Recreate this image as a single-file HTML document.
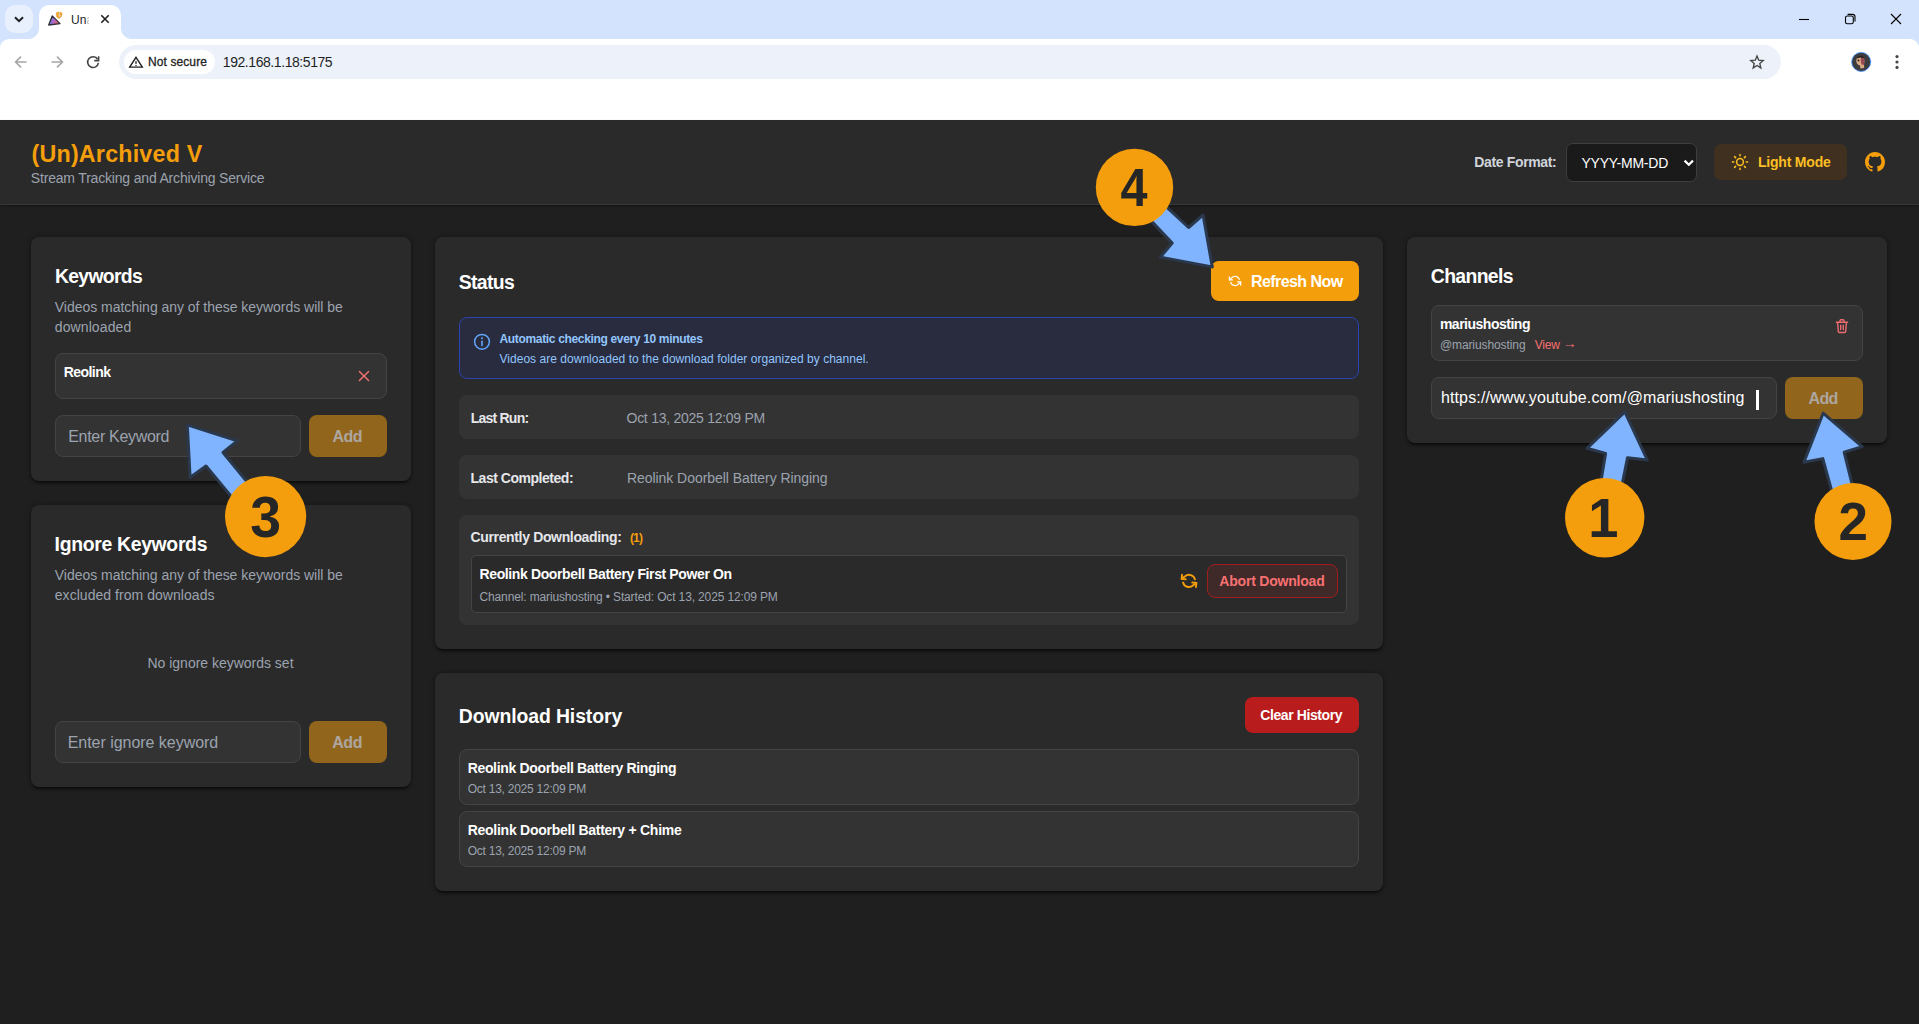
<!DOCTYPE html>
<html lang="en">
<head>
<meta charset="utf-8">
<title>(Un)Archived V</title>
<style>
*{box-sizing:border-box;margin:0;padding:0}
html,body{width:1919px;height:1024px;overflow:hidden;background:#1f1f1f;font-family:'Liberation Sans',sans-serif}
.a{position:absolute}
.t{position:absolute;white-space:pre;font-family:'Liberation Sans',sans-serif}
#tabstrip{left:0;top:0;width:1919px;height:60px;background:#d3e3fd}
#toolbar{left:0;top:39px;width:1919px;height:81px;background:#fff;border-radius:9px 9px 0 0}
#tabsearch{left:5px;top:5px;width:28px;height:28px;border-radius:10px;background:#e8f0fe}
#tab{left:39px;top:5px;width:82px;height:35px;background:#fff;border-radius:10px 10px 0 0}
#tab:before,#tab:after{content:"";position:absolute;bottom:1px;width:10px;height:10px;background:radial-gradient(circle at 0 0,rgba(255,255,255,0) 9.5px,#fff 10px)}
#tab:before{left:-10px}
#tab:after{right:-10px;background:radial-gradient(circle at 100% 0,rgba(255,255,255,0) 9.5px,#fff 10px)}
#omni{left:119px;top:45px;width:1662px;height:34px;border-radius:17px;background:#edf2fa}
#chip{left:124px;top:50px;width:91px;height:24px;border-radius:12px;background:#fff}
#header{left:0;top:120px;width:1919px;height:85px;background:#2a2a2a;border-bottom:1px solid #383838;box-shadow:0 1px 2px rgba(0,0,0,.35)}
.card{position:absolute;background:#2a2a2a;border-radius:8px;box-shadow:0 3px 3px -1px rgba(0,0,0,.55),0 0 4px 1px rgba(0,0,0,.24)}
.box{position:absolute;background:#333;border:1px solid #444;border-radius:8px}
.row{position:absolute;background:#333;border-radius:8px}
.addbtn{position:absolute;background:#92651d;border-radius:8px}
svg{position:absolute;overflow:visible}
.num{position:absolute;font-weight:700;color:#262626;text-align:center;white-space:pre}
</style>
</head>
<body>
<!-- browser chrome -->
<div class="a" id="tabstrip"></div>
<div class="a" id="toolbar"></div>
<div class="a" id="tabsearch"></div>
<div class="a" id="tab"></div>
<div class="a" id="omni"></div>
<div class="a" id="chip"></div>
<svg class="a" style="left:0;top:0" width="1919" height="120" viewBox="0 0 1919 120" fill="none" stroke-linecap="round" stroke-linejoin="round">
<!-- tab search chevron -->
<path d="M15 17.2 L19 21.2 L23 17.2" stroke="#1f1f1f" stroke-width="2" stroke-linecap="butt" stroke-linejoin="miter"/>
<!-- favicon -->
<defs><linearGradient id="fg" x1="0" y1="0.3" x2="1" y2="0.6"><stop offset="0.05" stop-color="#4a8fe8"/><stop offset=".5" stop-color="#b565c4"/><stop offset=".95" stop-color="#f0645a"/></linearGradient></defs>
<path d="M52.2 15.9 L48.7 25 L60 23.6 Z" fill="url(#fg)" stroke="#2e2e38" stroke-width="1.3"/>
<path d="M56.4 13.2 Q57.6 11.4 59.3 12.4 Q61.6 11.6 62.2 13.8 Q62.4 16.6 59.6 18.2 Q57.4 18.6 56.6 16.6 Q56 14.8 56.4 13.2Z" fill="#f5a52a" stroke="#d9922a" stroke-width=".5"/>
<path d="M59.6 13 Q58.4 15.4 59.2 16.6 Q60 16.8 60.4 15.4" stroke="#d8d8d8" stroke-width=".9" fill="none"/>
<!-- tab close -->
<path d="M101.3 15.3 L108.7 22.7 M108.7 15.3 L101.3 22.7" stroke="#1f1f1f" stroke-width="1.6" stroke-linecap="butt"/>
<!-- back -->
<path d="M26.5 62 H15.8 M21 56.6 L15.6 62 L21 67.4" stroke="#a6a6a6" stroke-width="1.6" stroke-linecap="butt" stroke-linejoin="miter"/>
<!-- forward -->
<path d="M51.5 62 H62.2 M57 56.6 L62.4 62 L57 67.4" stroke="#a6a6a6" stroke-width="1.6" stroke-linecap="butt" stroke-linejoin="miter"/>
<!-- reload -->
<path d="M97.6 59.2 A5.4 5.4 0 1 0 98.4 62.9" stroke="#474747" stroke-width="1.6" stroke-linecap="butt"/>
<path d="M98.6 56.2 V60.6 H94.2" stroke="#474747" stroke-width="1.6" stroke-linecap="butt" stroke-linejoin="miter"/>
<!-- warning -->
<path d="M136 57.4 L142.3 67.1 H129.7 Z" stroke="#1f1f1f" stroke-width="1.4" stroke-linejoin="miter"/>
<path d="M136 61 V64" stroke="#1f1f1f" stroke-width="1.2" stroke-linecap="butt"/><circle cx="136" cy="65.5" r=".7" fill="#1f1f1f"/>
<!-- star -->
<path d="M1757 56 L1758.7 60.2 L1763.2 60.6 L1759.8 63.5 L1760.8 67.9 L1757 65.5 L1753.2 67.9 L1754.2 63.5 L1750.8 60.6 L1755.3 60.2 Z" stroke="#474747" stroke-width="1.4" stroke-linejoin="miter"/>
<!-- avatar -->
<circle cx="1861.2" cy="61.9" r="9.5" fill="#3c3c3f" stroke="#3b8cff" stroke-width=".8"/>
<path d="M1856.6 59 Q1857 56.6 1860 56.6 L1862.6 56.8 Q1864.6 58 1864.4 61 L1864 65 L1864.2 68 L1860.4 68.4 L1860 65.4 Q1857.6 65.4 1857 63.6 L1856.2 61.2 Z" fill="#d9a884"/>
<path d="M1861 57 L1863 57 Q1864.8 58.4 1864.4 61.4 L1863.8 65 L1861.4 64.6 Q1860.4 61 1861 57Z" fill="#9a4a52"/>
<path d="M1856.8 57.4 Q1860 55 1864 57 L1863.4 58 Q1860 56.8 1857.2 58.4Z" fill="#1b1b1e"/>
<circle cx="1858.5" cy="60.4" r=".9" fill="#15110d"/>
<!-- kebab -->
<circle cx="1897" cy="56.6" r="1.6" fill="#474747"/><circle cx="1897" cy="62" r="1.6" fill="#474747"/><circle cx="1897" cy="67.4" r="1.6" fill="#474747"/>
<!-- window controls -->
<path d="M1799 19.5 H1809" stroke="#000" stroke-width="1.1" stroke-linecap="butt"/>
<rect x="1845.5" y="16" width="7.8" height="7.8" rx="1.8" stroke="#000" stroke-width="1.1"/>
<path d="M1847.6 14.4 H1852.6 A2.4 2.4 0 0 1 1855 16.8 V21.6" stroke="#000" stroke-width="1.1" stroke-linecap="butt"/>
<path d="M1891 14 L1901 24 M1901 14 L1891 24" stroke="#000" stroke-width="1.1" stroke-linecap="butt"/>
</svg>
<span class="t" style="left:71px;top:11.5px;width:18.2px;overflow:hidden;font-size:12px;line-height:16px;color:#1f1f1f">Un<span style="opacity:.3">a</span></span>

<!-- app -->
<div class="a" id="header"></div>
<div class="a" style="left:1565.5px;top:143px;width:131.5px;height:39px;background:#1a1a1a;border:1px solid #3e3e3e;border-radius:7px"></div>
<div class="a" style="left:1714px;top:144px;width:133px;height:36px;background:#40301f;border-radius:7px"></div>

<div class="card" style="left:31px;top:237px;width:380px;height:244px"></div>
<div class="card" style="left:31px;top:505px;width:380px;height:282px"></div>
<div class="card" style="left:435px;top:237px;width:948px;height:412px"></div>
<div class="card" style="left:435px;top:673px;width:948px;height:218px"></div>
<div class="card" style="left:1407px;top:237px;width:480px;height:206px"></div>

<!-- keywords -->
<div class="box" style="left:55px;top:353px;width:332px;height:46px"></div>
<div class="box" style="left:55px;top:415px;width:246px;height:42px"></div>
<div class="addbtn" style="left:309px;top:415px;width:78px;height:42px"></div>
<!-- ignore -->
<div class="box" style="left:55px;top:721px;width:246px;height:42px"></div>
<div class="addbtn" style="left:309px;top:721px;width:78px;height:42px"></div>
<!-- status -->
<div class="a" style="left:1211px;top:261px;width:148px;height:40px;background:#f59e0b;border-radius:8px"></div>
<div class="a" style="left:459px;top:317px;width:900px;height:62px;background:#282c3e;border:1px solid #2b44b3;border-radius:8px"></div>
<div class="row" style="left:459px;top:395px;width:900px;height:44px"></div>
<div class="row" style="left:459px;top:455px;width:900px;height:44px"></div>
<div class="row" style="left:459px;top:515px;width:900px;height:110px"></div>
<div class="a" style="left:471px;top:555px;width:876px;height:58px;background:#2a2a2a;border:1px solid #444;border-radius:5px"></div>
<div class="a" style="left:1207px;top:564px;width:131px;height:34px;background:#3f2929;border:1px solid #a11d1d;border-radius:8px"></div>
<!-- history -->
<div class="a" style="left:1245px;top:697px;width:114px;height:36px;background:#b91c1c;border-radius:8px"></div>
<div class="box" style="left:459px;top:749px;width:900px;height:56px"></div>
<div class="box" style="left:459px;top:811px;width:900px;height:56px"></div>
<!-- channels -->
<div class="box" style="left:1431px;top:305px;width:432px;height:56px"></div>
<div class="box" style="left:1431px;top:377px;width:346px;height:42px"></div>
<div class="addbtn" style="left:1785px;top:377px;width:78px;height:42px"></div>
<div class="a" style="left:1756px;top:390px;width:3px;height:20px;background:#fff"></div>

<span class="t" style="left:148.0px;top:53.6px;font-size:12px;line-height:16px;font-weight:400;color:#1f1f1f;letter-spacing:0.097px;-webkit-text-stroke:.3px #1f1f1f;">Not secure</span>
<span class="t" style="left:222.8px;top:52.8px;font-size:14px;line-height:18px;font-weight:400;color:#1f1f1f;letter-spacing:-0.434px;">192.168.1.18:5175</span>
<span class="t" style="left:31.5px;top:138.9px;font-size:23.3px;line-height:30px;font-weight:700;color:#f59e0b;letter-spacing:0.194px;">(Un)Archived V</span>
<span class="t" style="left:30.8px;top:168.8px;font-size:14px;line-height:18px;font-weight:400;color:#9ca3af;letter-spacing:-0.183px;">Stream Tracking and Archiving Service</span>
<span class="t" style="left:1474.2px;top:153.1px;font-size:14px;line-height:18px;font-weight:700;color:#d1d5db;letter-spacing:-0.342px;">Date Format:</span>
<span class="t" style="left:1581.5px;top:154.1px;font-size:14px;line-height:18px;font-weight:400;color:#ffffff;letter-spacing:-0.244px;">YYYY-MM-DD</span>
<span class="t" style="left:1757.9px;top:153.1px;font-size:14px;line-height:18px;font-weight:700;color:#fbbf24;letter-spacing:-0.186px;">Light Mode</span>
<span class="t" style="left:55.0px;top:263.8px;font-size:19.4px;line-height:25px;font-weight:700;color:#ffffff;letter-spacing:-0.711px;">Keywords</span>
<span class="t" style="left:54.8px;top:298.1px;font-size:14px;line-height:18px;font-weight:400;color:#9ca3af;letter-spacing:-0.027px;">Videos matching any of these keywords will be</span>
<span class="t" style="left:54.8px;top:318.1px;font-size:14px;line-height:18px;font-weight:400;color:#9ca3af;letter-spacing:0.098px;">downloaded</span>
<span class="t" style="left:63.7px;top:363.1px;font-size:14px;line-height:18px;font-weight:700;color:#ffffff;letter-spacing:-0.540px;">Reolink</span>
<span class="t" style="left:68.2px;top:426.0px;font-size:16px;line-height:21px;font-weight:400;color:#9ca3af;letter-spacing:-0.303px;">Enter Keyword</span>
<span class="t" style="left:332.5px;top:426.0px;font-size:16px;line-height:21px;font-weight:700;color:#aca69f;letter-spacing:-0.570px;">Add</span>
<span class="t" style="left:54.6px;top:531.8px;font-size:19.4px;line-height:25px;font-weight:700;color:#ffffff;letter-spacing:-0.321px;">Ignore Keywords</span>
<span class="t" style="left:54.8px;top:566.1px;font-size:14px;line-height:18px;font-weight:400;color:#9ca3af;letter-spacing:-0.030px;">Videos matching any of these keywords will be</span>
<span class="t" style="left:54.8px;top:586.1px;font-size:14px;line-height:18px;font-weight:400;color:#9ca3af;letter-spacing:0.041px;">excluded from downloads</span>
<span class="t" style="left:147.5px;top:654.4px;font-size:14px;line-height:18px;font-weight:400;color:#9ca3af;letter-spacing:-0.013px;">No ignore keywords set</span>
<span class="t" style="left:67.7px;top:732.2px;font-size:16px;line-height:21px;font-weight:400;color:#9ca3af;letter-spacing:-0.034px;">Enter ignore keyword</span>
<span class="t" style="left:332.2px;top:732.0px;font-size:16px;line-height:21px;font-weight:700;color:#aca69f;letter-spacing:-0.436px;">Add</span>
<span class="t" style="left:458.8px;top:270.0px;font-size:19.4px;line-height:25px;font-weight:700;color:#ffffff;letter-spacing:-0.669px;">Status</span>
<span class="t" style="left:1251.0px;top:271.0px;font-size:16px;line-height:21px;font-weight:700;color:#ffffff;letter-spacing:-0.572px;">Refresh Now</span>
<span class="t" style="left:499.5px;top:330.8px;font-size:12px;line-height:16px;font-weight:700;color:#93c5fd;letter-spacing:-0.336px;">Automatic checking every 10 minutes</span>
<span class="t" style="left:499.5px;top:350.8px;font-size:12px;line-height:16px;font-weight:400;color:#93c5fd;letter-spacing:0.028px;">Videos are downloaded to the download folder organized by channel.</span>
<span class="t" style="left:470.8px;top:408.6px;font-size:14px;line-height:18px;font-weight:700;color:#e5e7eb;letter-spacing:-0.785px;">Last Run:</span>
<span class="t" style="left:626.5px;top:408.6px;font-size:14px;line-height:18px;font-weight:400;color:#9ca3af;letter-spacing:-0.261px;">Oct 13, 2025 12:09 PM</span>
<span class="t" style="left:470.5px;top:468.7px;font-size:14px;line-height:18px;font-weight:700;color:#e5e7eb;letter-spacing:-0.472px;">Last Completed:</span>
<span class="t" style="left:627.0px;top:468.7px;font-size:14px;line-height:18px;font-weight:400;color:#9ca3af;letter-spacing:-0.057px;">Reolink Doorbell Battery Ringing</span>
<span class="t" style="left:470.5px;top:528.3px;font-size:14px;line-height:18px;font-weight:700;color:#e5e7eb;letter-spacing:-0.349px;">Currently Downloading:</span>
<span class="t" style="left:630.0px;top:529.8px;font-size:12px;line-height:16px;font-weight:700;color:#f59e0b;letter-spacing:-0.891px;">(1)</span>
<span class="t" style="left:479.5px;top:565.1px;font-size:14px;line-height:18px;font-weight:700;color:#ffffff;letter-spacing:-0.375px;">Reolink Doorbell Battery First Power On</span>
<span class="t" style="left:479.5px;top:588.8px;font-size:12px;line-height:16px;font-weight:400;color:#9ca3af;letter-spacing:-0.137px;">Channel: mariushosting • Started: Oct 13, 2025 12:09 PM</span>
<span class="t" style="left:1219.3px;top:571.7px;font-size:14px;line-height:18px;font-weight:700;color:#f87171;letter-spacing:-0.208px;">Abort Download</span>
<span class="t" style="left:458.8px;top:703.6px;font-size:19.4px;line-height:25px;font-weight:700;color:#ffffff;letter-spacing:-0.096px;">Download History</span>
<span class="t" style="left:1260.2px;top:706.1px;font-size:14px;line-height:18px;font-weight:700;color:#ffffff;letter-spacing:-0.397px;">Clear History</span>
<span class="t" style="left:467.7px;top:759.1px;font-size:14px;line-height:18px;font-weight:700;color:#ffffff;letter-spacing:-0.338px;">Reolink Doorbell Battery Ringing</span>
<span class="t" style="left:467.7px;top:780.8px;font-size:12px;line-height:16px;font-weight:400;color:#9ca3af;letter-spacing:-0.244px;">Oct 13, 2025 12:09 PM</span>
<span class="t" style="left:467.7px;top:821.4px;font-size:14px;line-height:18px;font-weight:700;color:#ffffff;letter-spacing:-0.260px;">Reolink Doorbell Battery + Chime</span>
<span class="t" style="left:467.7px;top:842.8px;font-size:12px;line-height:16px;font-weight:400;color:#9ca3af;letter-spacing:-0.244px;">Oct 13, 2025 12:09 PM</span>
<span class="t" style="left:1430.8px;top:263.5px;font-size:19.4px;line-height:25px;font-weight:700;color:#ffffff;letter-spacing:-0.654px;">Channels</span>
<span class="t" style="left:1439.9px;top:315.1px;font-size:14px;line-height:18px;font-weight:700;color:#ffffff;letter-spacing:-0.490px;">mariushosting</span>
<span class="t" style="left:1439.9px;top:336.6px;font-size:12px;line-height:16px;font-weight:400;color:#9ca3af;letter-spacing:-0.092px;">@mariushosting</span>
<span class="t" style="left:1534.7px;top:336.6px;font-size:12px;line-height:16px;font-weight:400;color:#f87171;letter-spacing:-0.199px;">View</span>
<span class="t" style="left:1562.7px;top:333.9px;font-size:14px;line-height:18px;font-weight:400;color:#f87171;letter-spacing:-1.600px;letter-spacing:0;">→</span>
<span class="t" style="left:1440.9px;top:387.0px;font-size:16px;line-height:21px;font-weight:400;color:#ffffff;letter-spacing:0.143px;">https://www.youtube.com/@mariushosting</span>
<span class="t" style="left:1808.5px;top:387.7px;font-size:16px;line-height:21px;font-weight:700;color:#aca69f;letter-spacing:-0.603px;">Add</span>
<svg class="a" style="left:0;top:0" width="1919" height="1024" viewBox="0 0 1919 1024" fill="none" stroke-linecap="round" stroke-linejoin="round">
<!-- select chevron -->
<path d="M1684.6 160.6 L1688.8 164.8 L1693 160.6" stroke="#fff" stroke-width="2.2" stroke-linecap="butt" stroke-linejoin="miter"/>
<!-- sun -->
<g stroke="#fbbf24" stroke-width="1.5">
<circle cx="1740" cy="162" r="3.4"/>
<path d="M1740 154.4v1.4M1740 168.2v1.4M1732.4 162h1.4M1746.2 162h1.4M1734.6 156.6l1 1M1744.4 166.4l1 1M1734.6 167.4l1-1M1744.4 157.6l1-1"/>
</g>
<!-- github -->
<g transform="translate(1865,152) scale(1.25)"><path fill="#f59e0b" d="M8 0C3.58 0 0 3.58 0 8c0 3.54 2.29 6.53 5.47 7.59.4.07.55-.17.55-.38 0-.19-.01-.82-.01-1.49-2.01.37-2.53-.49-2.69-.94-.09-.23-.48-.94-.82-1.13-.28-.15-.68-.52-.01-.53.63-.01 1.08.58 1.23.82.72 1.21 1.87.87 2.33.66.07-.52.28-.87.51-1.07-1.78-.2-3.64-.89-3.64-3.95 0-.87.31-1.59.82-2.15-.08-.2-.36-1.02.08-2.12 0 0 .67-.21 2.2.82.64-.18 1.32-.27 2-.27.68 0 1.36.09 2 .27 1.53-1.04 2.2-.82 2.2-.82.44 1.1.16 1.92.08 2.12.51.56.82 1.27.82 2.15 0 3.07-1.87 3.75-3.65 3.95.29.25.54.73.54 1.48 0 1.07-.01 1.93-.01 2.2 0 .21.15.46.55.38A8.013 8.013 0 0016 8c0-4.42-3.58-8-8-8z"/></g>
<!-- keyword x -->
<path d="M359.4 371.4 L368.6 380.6 M368.6 371.4 L359.4 380.6" stroke="#f87171" stroke-width="1.4"/>
<!-- refresh (white) -->
<g transform="translate(1228.9,274.8) scale(0.51)" stroke="#fff" stroke-width="2.5">
<path d="M1 4v6h6"/><path d="M23 20v-6h-6"/><path d="M20.49 9A9 9 0 0 0 5.64 5.64L1 10m22 4l-4.64 4.36A9 9 0 0 1 3.51 15"/>
</g>
<!-- info -->
<circle cx="482" cy="341.8" r="7.4" stroke="#60a5fa" stroke-width="1.5"/>
<path d="M482 341.2 V345.6" stroke="#60a5fa" stroke-width="1.6"/><circle cx="482" cy="338.2" r="1" fill="#60a5fa"/>
<!-- spinner (amber) -->
<g transform="translate(1189,580.9) rotate(5) scale(0.68) translate(-12,-12)" stroke="#f59e0b" stroke-width="2.8">
<path d="M1 4v6h6"/><path d="M23 20v-6h-6"/><path d="M20.49 9A9 9 0 0 0 5.64 5.64L1 10m22 4l-4.64 4.36A9 9 0 0 1 3.51 15"/>
</g>
<!-- trash -->
<g stroke="#ee6c70" stroke-width="1.4">
<path d="M1836.4 322.2 H1847.6"/>
<path d="M1840 322 V320.6 A1 1 0 0 1 1841 319.7 H1843 A1 1 0 0 1 1844 320.6 V322"/>
<path d="M1837.6 322.4 L1838.3 331.4 A1.2 1.2 0 0 0 1839.5 332.5 H1844.5 A1.2 1.2 0 0 0 1845.7 331.4 L1846.4 322.4"/>
<path d="M1840.7 325.2 V329.6 M1843.3 325.2 V329.6"/>
</g>
</svg>

<svg class="a" style="left:0;top:0" width="1919" height="1024" viewBox="0 0 1919 1024">
<polygon points="187.3,424.9 237.3,440.8 223.0,452.5 254.0,490.2 239.7,506.6 206.0,466.0 190.1,477.4" fill="#81b4fe" stroke="#2a384d" stroke-width="3" stroke-linejoin="round"/>
<polygon points="1212.3,266.9 1203.1,214.9 1188.6,227.5 1157.8,198.8 1142.9,212.1 1172.2,243.1 1160.4,257.1" fill="#81b4fe" stroke="#2a384d" stroke-width="3" stroke-linejoin="round"/>
<polygon points="1624.8,411.8 1587.0,448.3 1605.6,453.4 1599.0,492.7 1619.9,495.5 1627.5,457.8 1647.4,460.1" fill="#81b4fe" stroke="#2a384d" stroke-width="3" stroke-linejoin="round"/>
<polygon points="1823.1,413.2 1803.9,462.3 1822.8,458.6 1834.8,502.2 1855.1,496.3 1844.2,452.3 1862.2,446.6" fill="#81b4fe" stroke="#2a384d" stroke-width="3" stroke-linejoin="round"/>
<circle cx="265.6" cy="516.6" r="40.6" fill="#f59e0d"/>
<circle cx="1134.5" cy="187.4" r="38.7" fill="#f59e0d"/>
<circle cx="1604.7" cy="517.8" r="39.7" fill="#f59e0d"/>
<circle cx="1853" cy="521.5" r="38.5" fill="#f59e0d"/>
<text transform="translate(265.7,536.6) scale(0.955,1)" font-family="Liberation Sans, sans-serif" font-weight="700" font-size="58" text-anchor="middle" fill="#262626">3</text>
<text transform="translate(1134.0,206.4) scale(0.9,1)" font-family="Liberation Sans, sans-serif" font-weight="700" font-size="54" text-anchor="middle" fill="#262626">4</text>
<text transform="translate(1603.4,537.2) scale(0.97,1)" font-family="Liberation Sans, sans-serif" font-weight="700" font-size="56" text-anchor="middle" fill="#262626">1</text>
<text transform="translate(1853.25,540.3) scale(0.98,1)" font-family="Liberation Sans, sans-serif" font-weight="700" font-size="54" text-anchor="middle" fill="#262626">2</text>
</svg>
</body>
</html>
